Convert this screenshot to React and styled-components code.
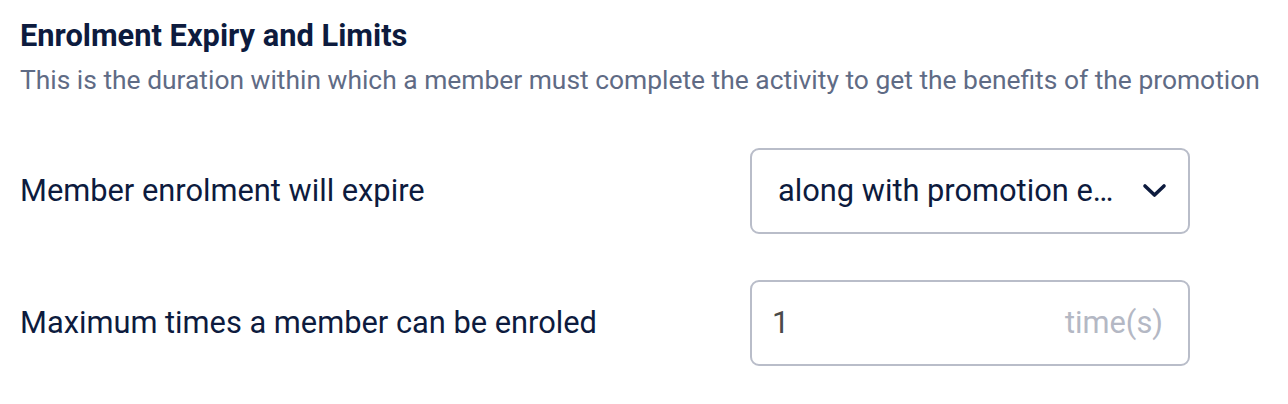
import styled, { createGlobalStyle } from "styled-components";

const colors = {
	navy: "#0d1b3e",
	slate: "#5f6b85",
	border: "#b9bdc9",
	value: "#4a4a4a",
	muted: "#b4b8c4"
};

const GlobalStyle = createGlobalStyle`
	html, body {
		margin: 0;
		padding: 0;
		background: #ffffff;
	}
	body {
		font-family: Roboto, "Noto Sans", "Liberation Sans", sans-serif;
		color: ${colors.navy};
	}
`;

const App = () => {
	return (
		<>
			<GlobalStyle />
			<Section>
				<Title>Enrolment Expiry and Limits</Title>
				<Description>
					This is the duration within which a member must complete the
					activity to get the benefits of the promotion
				</Description>
				<Fields>
					<FieldRow>
						<Label>Member enrolment will expire</Label>
						<Select>
							<SelectValue>along with promotion end date</SelectValue>
							<Chevron />
						</Select>
					</FieldRow>
					<FieldRow>
						<Label>Maximum times a member can be enroled</Label>
						<NumberBox>
							<NumberValue>1</NumberValue>
							<Suffix>time(s)</Suffix>
						</NumberBox>
					</FieldRow>
				</Fields>
			</Section>
		</>
	);
};

export default App;

/* Other Components */

const Chevron = () => (
	<svg width="25" height="16" viewBox="0 0 25 16" fill="none">
		<polyline
			points="3,3 12.5,12 22,3"
			stroke={colors.navy}
			strokeWidth="3.6"
			strokeLinecap="round"
			strokeLinejoin="round"
		/>
	</svg>
);

/* Styled Components */

const Section = styled.div`
	padding: 15.5px 20px 0;
`;

const Title = styled.h2`
	margin: 0;
	font-size: 30.8px;
	line-height: 40px;
	font-weight: 700;
	color: ${colors.navy};
`;

const Description = styled.p`
	margin: 7px 0 0;
	font-size: 26.4px;
	line-height: 34px;
	color: ${colors.slate};
	white-space: nowrap;
`;

const Fields = styled.div`
	display: flex;
	flex-direction: column;
	gap: 46px;
	margin-top: 51px;
`;

const FieldRow = styled.div`
	display: grid;
	grid-template-columns: 730px 440px;
	align-items: center;
`;

const Label = styled.div`
	font-size: 30.8px;
	line-height: 40px;
	color: ${colors.navy};
`;

const Box = styled.div`
	box-sizing: border-box;
	height: 86px;
	border: 2px solid ${colors.border};
	border-radius: 9px;
	display: flex;
	align-items: center;
	font-size: 30.8px;
	background: #fff;
`;

const Select = styled(Box)`
	padding: 0 21px 0 26px;
	gap: 24px;
	cursor: pointer;

	svg {
		flex-shrink: 0;
	}
`;

const SelectValue = styled.div`
	flex: 1;
	min-width: 0;
	white-space: nowrap;
	overflow: hidden;
	text-overflow: ellipsis;
	color: ${colors.navy};
`;

const NumberBox = styled(Box)`
	padding: 0 25px 0 20px;
	justify-content: space-between;
`;

const NumberValue = styled.span`
	color: ${colors.value};
`;

const Suffix = styled.span`
	color: ${colors.muted};
`;
